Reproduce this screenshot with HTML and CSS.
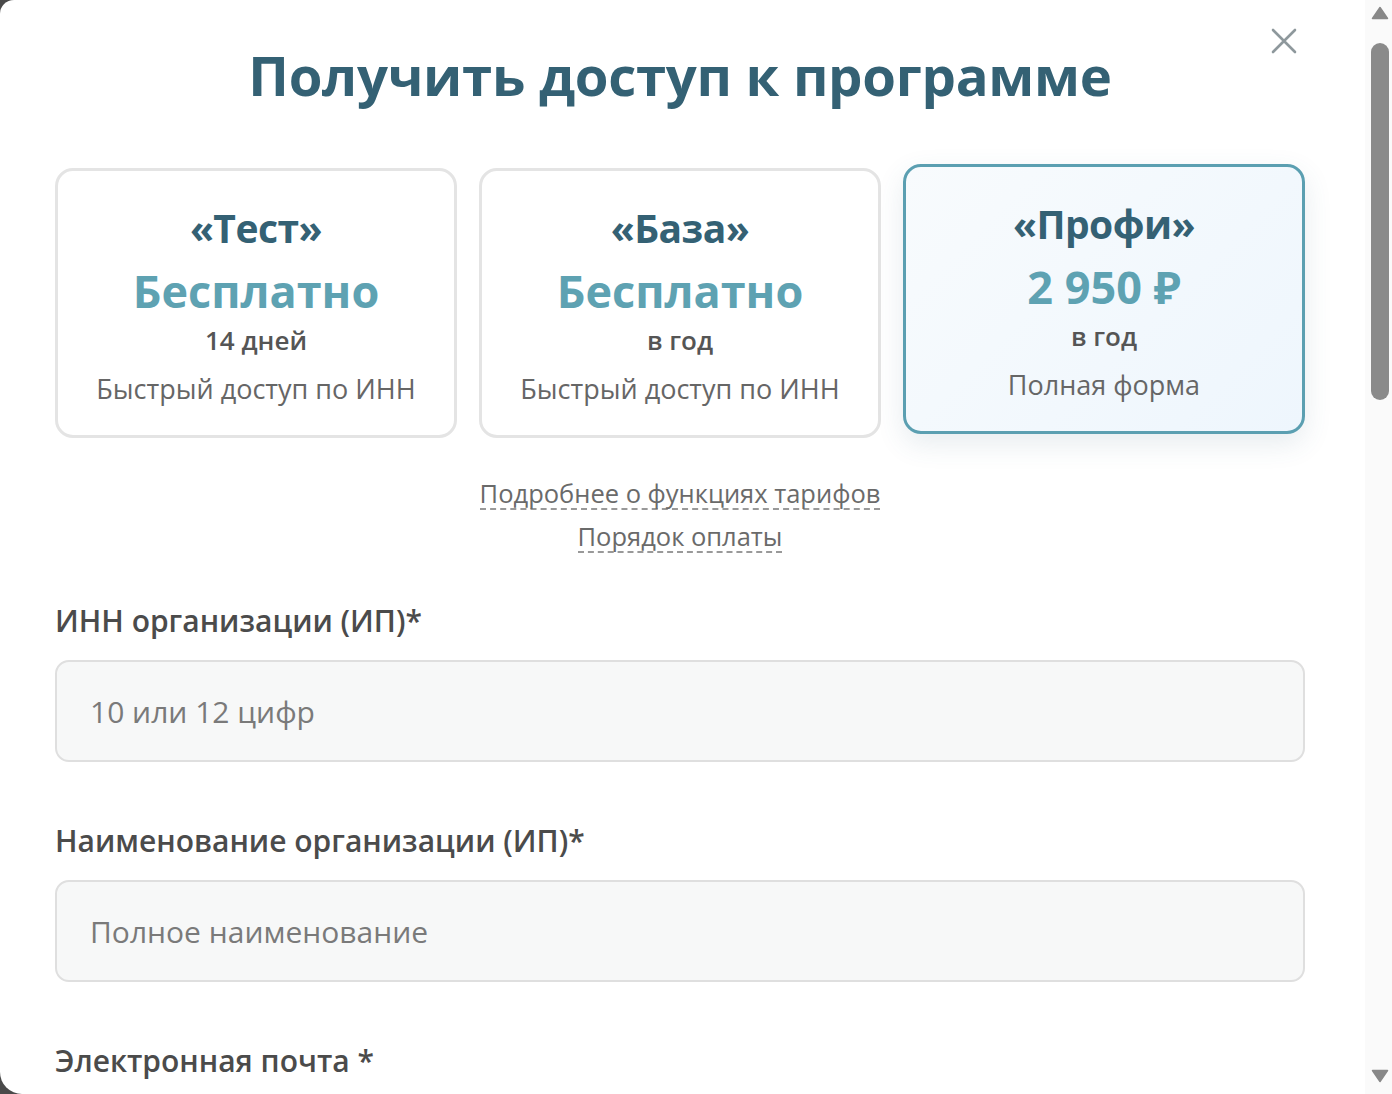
FILE: index.html
```html
<!DOCTYPE html>
<html lang="ru">
<head>
    <meta charset="UTF-8">
    <meta name="viewport" content="width=device-width, initial-scale=1.0">
    <title>Получить доступ к программе</title>
    <link rel="stylesheet" href="styles.css">
</head>
<body>
    <div class="modal">
        <div class="modal-body">
            <button class="modal-close" type="button" aria-label="Закрыть">
                <svg width="28" height="28" viewBox="0 0 28 28">
                    <path d="M3 3 L25 25 M25 3 L3 25" stroke="#8e989c" stroke-width="2.6" stroke-linecap="round" fill="none"/>
                </svg>
            </button>

            <h1 class="modal-title">Получить доступ к программе</h1>

            <div class="tariffs">
                <div class="tariff">
                    <div class="tariff-name">«Тест»</div>
                    <div class="tariff-price">Бесплатно</div>
                    <div class="tariff-period">14 дней</div>
                    <div class="tariff-feature">Быстрый доступ по ИНН</div>
                </div>
                <div class="tariff">
                    <div class="tariff-name">«База»</div>
                    <div class="tariff-price">Бесплатно</div>
                    <div class="tariff-period">в год</div>
                    <div class="tariff-feature">Быстрый доступ по ИНН</div>
                </div>
                <div class="tariff active">
                    <div class="tariff-name">«Профи»</div>
                    <div class="tariff-price">2 950 ₽</div>
                    <div class="tariff-period">в год</div>
                    <div class="tariff-feature">Полная форма</div>
                </div>
            </div>

            <div class="tariff-links">
                <a class="dashed-link" href="#">Подробнее о функциях тарифов</a>
                <a class="dashed-link" href="#">Порядок оплаты</a>
            </div>

            <form class="access-form">
                <div class="field">
                    <label class="field-label">ИНН организации (ИП)*</label>
                    <input class="field-input" type="text" placeholder="10 или 12 цифр">
                </div>
                <div class="field">
                    <label class="field-label">Наименование организации (ИП)*</label>
                    <input class="field-input" type="text" placeholder="Полное наименование">
                </div>
                <div class="field">
                    <label class="field-label">Электронная почта *</label>
                    <input class="field-input" type="email" placeholder="example@mail.ru">
                </div>
                <div class="field">
                    <label class="field-label">Телефон *</label>
                    <input class="field-input" type="tel" placeholder="+7 (___) ___-__-__">
                </div>
                <button class="submit" type="submit">Получить доступ</button>
            </form>
        </div>

        <!-- полоса прокрутки -->
        <div class="scrollbar">
            <svg class="scrollbar-arrow" width="18" height="14" viewBox="0 0 18 14">
                <path d="M9 1.5 L16.5 12.5 L1.5 12.5 Z" fill="#888" stroke="#888" stroke-width="1.5" stroke-linejoin="round"/>
            </svg>
            <div class="scrollbar-thumb"></div>
            <div class="scrollbar-track"></div>
            <svg class="scrollbar-arrow" width="18" height="14" viewBox="0 0 18 14">
                <path d="M1.5 1.5 L16.5 1.5 L9 12.5 Z" fill="#888" stroke="#888" stroke-width="1.5" stroke-linejoin="round"/>
            </svg>
        </div>
    </div>
</body>
</html>
```

FILE: styles.css
```css
html, body {
    margin: 0;
    height: 100%;
    background-color: #4a4a4a;
    font-family: "Open Sans", "Noto Sans", sans-serif;
}

.modal {
    display: flex;
    height: 100vh;
    overflow: hidden;
    background-color: #fff;
    border-radius: 14px 0 0 22px;
}

.modal-body {
    position: relative;
    flex: 1;
    min-width: 0;
    overflow: hidden;
    padding: 35px 60px 55px 55px;
}

.scrollbar {
    width: 27px;
    flex-shrink: 0;
    box-sizing: border-box;
    display: flex;
    flex-direction: column;
    padding: 6px 3px 11px 6px;
    background-color: #fafafa;
}

.scrollbar-arrow {
    display: block;
}

.scrollbar-thumb {
    height: 357px;
    margin-top: 23px;
    border-radius: 9px;
    background-color: #8a8a8a;
}

.scrollbar-track {
    flex: 1;
}

.modal-close {
    position: absolute;
    top: 27px;
    right: 67px;
    width: 28px;
    height: 28px;
    padding: 0;
    border: none;
    background: none;
    cursor: pointer;
}

.modal-close svg {
    display: block;
}

.modal-title {
    margin: 0;
    text-align: center;
    font-size: 54.5px;
    line-height: 80px;
    font-weight: 700;
    color: #346174;
    letter-spacing: -0.3px;
}

/* тарифы */
.tariffs {
    display: grid;
    grid-template-columns: repeat(3, 1fr);
    gap: 22px;
    margin-top: 53px;
}

.tariff {
    border: 3px solid #e4e4e4;
    border-radius: 18px;
    padding: 33px 10px 29px;
    text-align: center;
    background-color: #fff;
    cursor: pointer;
}

.tariff.active {
    border-color: #5b9fb1;
    background: linear-gradient(135deg, #f8fbfd 0%, #eef6fd 100%);
    box-shadow: 0 10px 28px rgba(60, 100, 120, 0.12);
    transform: translateY(-4px);
}

.tariff-name {
    font-size: 39px;
    line-height: 48px;
    font-weight: 700;
    color: #346174;
    letter-spacing: -0.5px;
}

.tariff-price {
    margin-top: 8px;
    font-size: 45px;
    line-height: 62px;
    font-weight: 700;
    color: #5ea2b2;
}

.tariff-period {
    margin-top: 1px;
    font-size: 26px;
    line-height: 34px;
    font-weight: 600;
    color: #555;
}

.tariff-feature {
    margin-top: 15px;
    font-size: 27px;
    line-height: 34px;
    font-weight: 500;
    color: #666;
}

.tariff-links {
    display: flex;
    flex-direction: column;
    align-items: center;
    gap: 11px;
    margin-top: 40px;
}

.dashed-link {
    font-size: 25.5px;
    line-height: 30px;
    color: #6a6a6a;
    text-decoration: none;
    border-bottom: 2px dashed #999;
}

/* форма */
.access-form {
    margin-top: 48px;
}

.field {
    margin-bottom: 59px;
}

.field-label {
    display: block;
    margin-bottom: 19px;
    font-size: 30px;
    line-height: 40px;
    font-weight: 600;
    color: #4b4b4b;
}

.field-input {
    display: block;
    width: 100%;
    height: 102px;
    box-sizing: border-box;
    padding: 0 33px;
    border: 2px solid #dfdfdf;
    border-radius: 14px;
    background-color: #f7f8f8;
    font-family: inherit;
    font-size: 30px;
    color: #333;
}

.field-input::placeholder {
    color: #7a7a7a;
}

.submit {
    display: block;
    width: 100%;
    height: 96px;
    border: none;
    border-radius: 14px;
    background-color: #5ea2b2;
    color: #fff;
    font-family: inherit;
    font-size: 30px;
    font-weight: 700;
    cursor: pointer;
}
```
